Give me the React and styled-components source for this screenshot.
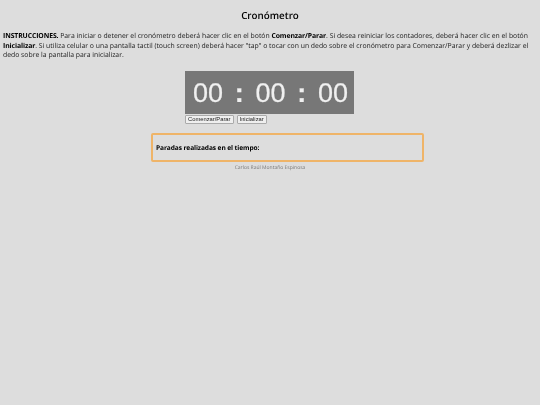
import styled, { createGlobalStyle } from "styled-components";

const GlobalStyle = createGlobalStyle`
  html, body {
    margin: 0;
    background: #dddddd;
  }

  body {
    font-family: "Open Sans", sans-serif;
    color: #222;
    text-rendering: geometricPrecision;
  }
`;

export default function App() {
  return (
    <Page>
      <GlobalStyle />
      <Title>Cronómetro</Title>
      <Instructions>
        <strong>INSTRUCCIONES.</strong> Para iniciar o detener el cronómetro deberá hacer clic en el botón{" "}
        <strong>Comenzar/Parar</strong>. Si desea reiniciar los contadores, deberá hacer clic en el botón{" "}
        <strong>Inicializar</strong>. Si utiliza celular o una pantalla tactil (touch screen) deberá hacer "tap" o
        tocar con un dedo sobre el cronómetro para Comenzar/Parar y deberá dezlizar el dedo sobre la pantalla para
        inicializar.
      </Instructions>
      <Stopwatch>
        <Display>
          <Digits>00</Digits>
          <Colon>:</Colon>
          <Digits>00</Digits>
          <Colon>:</Colon>
          <Digits>00</Digits>
        </Display>
        <Buttons>
          <Button>Comenzar/Parar</Button>
          <Button>Inicializar</Button>
        </Buttons>
      </Stopwatch>
      <Stops>Paradas realizadas en el tiempo:</Stops>
      <Author>Carlos Raúl Montaño Espinosa</Author>
    </Page>
  );
}

const Page = styled.div`
  display: flex;
  flex-direction: column;
  align-items: center;
  padding: 9px 3px 0;
  filter: blur(0.2px);
`;

const Title = styled.h1`
  margin: 0;
  font-size: 9.8px;
  line-height: 14px;
  font-weight: 600;
  color: #000;
`;

const Instructions = styled.p`
  align-self: stretch;
  margin: 9px 0 0;
  font-size: 6.85px;
  line-height: 9.5px;
  color: #1c1c1c;

  & strong {
    font-weight: 700;
    letter-spacing: -0.1px;
    color: #000;
  }
`;

const Stopwatch = styled.div`
  display: flex;
  flex-direction: column;
  gap: 1px;
  margin: 10px 1px 0 0;
  width: 169px;
`;

const Display = styled.div`
  display: flex;
  align-items: center;
  justify-content: space-between;
  box-sizing: border-box;
  height: 43px;
  padding: 2px 6px 0 8px;
  background: #777777;
  color: #f0f0f0;
  font-family: "Liberation Sans", sans-serif;
  font-size: 27px;
  -webkit-text-stroke: 0.2px #f0f0f0;
`;

const Digits = styled.span`
  display: block;
`;

const Colon = styled.span`
  display: block;
  font-weight: 700;
`;

const Buttons = styled.div`
  display: flex;
  gap: 3px;
`;

const Button = styled.button`
  box-sizing: border-box;
  height: 9px;
  padding: 0 2px;
  border: 1px solid #aaaaaa;
  border-radius: 1px;
  background: #efefef;
  color: #222;
  font-family: "Liberation Sans", sans-serif;
  font-size: 5.8px;
  line-height: 7px;
`;

const Stops = styled.div`
  display: flex;
  align-items: center;
  align-self: flex-start;
  box-sizing: border-box;
  width: 273px;
  height: 29px;
  margin: 9px 0 0 148px;
  padding: 0 3px;
  border: 2px solid #efb468;
  border-radius: 2px;
  font-size: 6.6px;
  font-weight: 700;
  letter-spacing: -0.1px;
  color: #000;
`;

const Author = styled.div`
  margin-top: 2px;
  font-size: 5px;
  line-height: 9px;
  color: #777777;
`;
